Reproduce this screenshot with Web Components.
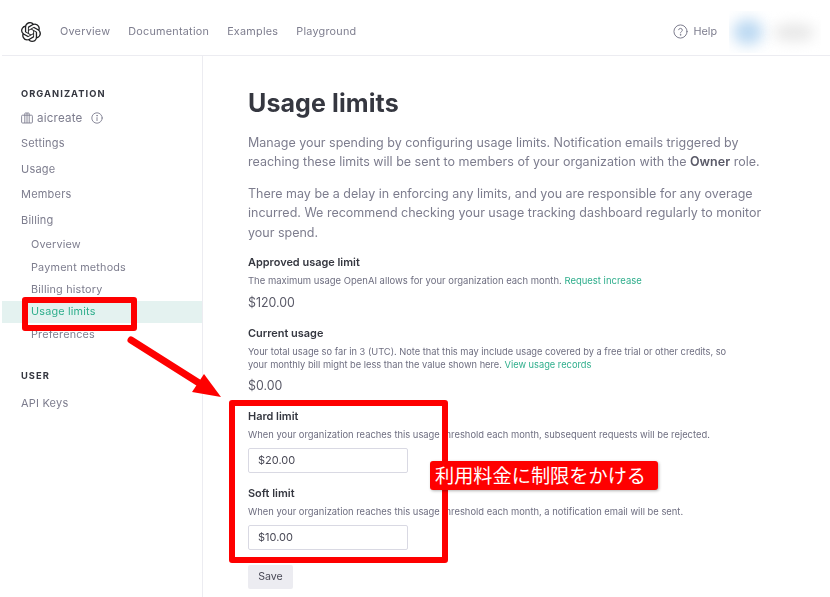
<!DOCTYPE html>
<html lang="en">
<head>
<meta charset="utf-8">
<title>Usage limits</title>
<style>
  html, body { margin: 0; padding: 0; background: #fff; height: 597px; overflow: hidden; }
  body { font-family: Inter, "Noto Sans", sans-serif; color: #6e6e80; }
</style>
</head>
<body>
<app-page>
  <top-bar slot="top"></top-bar>
  <side-nav slot="side"></side-nav>
  <limits-view slot="main"></limits-view>
</app-page>
<red-notes></red-notes>

<script>
class appPage extends HTMLElement {
    constructor() {
        super();
        this.attachShadow({mode: "open"}).innerHTML = `
            <style>
                :host { display: grid; grid-template-columns: 203px 1fr; grid-template-rows: 56px 541px; width: 830px; height: 597px; filter: blur(.3px); }
                .top { grid-column: 1 / 3; }
            </style>
            <div class="top"><slot name="top"></slot></div>
            <slot name="side"></slot>
            <slot name="main"></slot>`;
    }
}

class topBar extends HTMLElement {
    constructor() {
        super();
        this.attachShadow({mode: "open"}).innerHTML = `
            <style>
                :host { display: flex; align-items: center; height: 47px; margin-left: 2px; padding: 8px 0 0 19px; border-bottom: 1px solid #ececf1; font-size: 10.8px; color: #7d7d8e; }
                svg { display: block; }
                .logo { width: 20px; height: 20px; margin-right: 19px; color: #202123; }
                nav { display: flex; gap: 18px; letter-spacing: .25px; }
                .help { margin-left: auto; display: flex; align-items: center; gap: 5px; margin-right: 12px; }
                .help svg { width: 15px; height: 15px; }
                .who { width: 92px; height: 42px; margin-right: 9px; position: relative; overflow: hidden; }
                .who i { position: absolute; border-radius: 50%; filter: blur(7px); }
                .who .a { left: 4px; top: 8px; width: 30px; height: 26px; background: #bcd9f2; }
                .who .b { left: 44px; top: 13px; width: 42px; height: 17px; background: #e6e6e6; }
            </style>
            <svg class="logo" viewBox="0 0 24 24" fill="currentColor"><path d="M22.2819 9.8211a5.9847 5.9847 0 0 0-.5157-4.9108 6.0462 6.0462 0 0 0-6.5098-2.9A6.0651 6.0651 0 0 0 4.9807 4.1818a5.9847 5.9847 0 0 0-3.9977 2.9 6.0462 6.0462 0 0 0 .7427 7.0966 5.98 5.98 0 0 0 .511 4.9107 6.051 6.051 0 0 0 6.5146 2.9001A5.9847 5.9847 0 0 0 13.2599 24a6.0557 6.0557 0 0 0 5.7718-4.2058 5.9894 5.9894 0 0 0 3.9977-2.9001 6.0557 6.0557 0 0 0-.7475-7.0729zm-9.022 12.6081a4.4755 4.4755 0 0 1-2.8764-1.0408l.1419-.0804 4.7783-2.7582a.7948.7948 0 0 0 .3927-.6813v-6.7369l2.02 1.1686a.071.071 0 0 1 .038.052v5.5826a4.504 4.504 0 0 1-4.4945 4.4944zm-9.6607-4.1254a4.4708 4.4708 0 0 1-.5346-3.0137l.142.0852 4.783 2.7582a.7712.7712 0 0 0 .7806 0l5.8428-3.3685v2.3324a.0804.0804 0 0 1-.0332.0615L9.74 19.9502a4.4992 4.4992 0 0 1-6.1408-1.6464zM2.3408 7.8956a4.485 4.485 0 0 1 2.3655-1.9728V11.6a.7664.7664 0 0 0 .3879.6765l5.8144 3.3543-2.0201 1.1685a.0757.0757 0 0 1-.071 0l-4.8303-2.7865A4.504 4.504 0 0 1 2.3408 7.872zm16.5963 3.8558L13.1038 8.364 15.1192 7.2a.0757.0757 0 0 1 .071 0l4.8303 2.7913a4.4944 4.4944 0 0 1-.6765 8.1042v-5.6772a.79.79 0 0 0-.407-.667zm2.0107-3.0231l-.142-.0852-4.7735-2.7818a.7759.7759 0 0 0-.7854 0L9.409 9.2297V6.8974a.0662.0662 0 0 1 .0284-.0615l4.8303-2.7866a4.4992 4.4992 0 0 1 6.6802 4.66zM8.3065 12.863l-2.02-1.1638a.0804.0804 0 0 1-.038-.0567V6.0742a4.4992 4.4992 0 0 1 7.3757-3.4537l-.142.0805L8.704 5.459a.7948.7948 0 0 0-.3927.6813zm1.0976-2.3654l2.602-1.4998 2.6069 1.4998v2.9994l-2.5974 1.4997-2.6067-1.4997Z"/></svg>
            <nav><span>Overview</span><span>Documentation</span><span>Examples</span><span>Playground</span></nav>
            <div class="help">
                <svg viewBox="0 0 24 24" fill="none" stroke="currentColor" stroke-width="1.6" stroke-linecap="round"><circle cx="12" cy="12" r="10.5"/><path d="M9 9.2a3 3 0 0 1 5.9.8c0 2-3 2.6-3 4.3"/><circle cx="11.9" cy="17.4" r=".5"/></svg>
                <span>Help</span>
            </div>
            <div class="who"><i class="a"></i><i class="b"></i></div>`;
    }
}

class navItem extends HTMLElement {
    constructor() {
        super();
        this.attachShadow({mode: "open"}).innerHTML = `
            <style>
                :host { display: flex; align-items: center; height: 25.5px; margin-left: 2px; padding-left: 19px; font-size: 11px; letter-spacing: .2px; color: #7d7d8e; }
                :host([sub]) { height: 22.4px; padding-left: 29px; font-size: 10.8px; }
                :host([active]) { background: #e4f2f0; color: #2fae8c; }
            </style>
            <slot></slot>`;
    }
}

class navHead extends HTMLElement {
    constructor() {
        super();
        this.attachShadow({mode: "open"}).innerHTML = `
            <style>
                :host { display: block; margin-left: 21px; font-size: 9.3px; line-height: 12px; font-weight: 700; letter-spacing: 1.05px; color: #353740; }
            </style>
            <slot></slot>`;
    }
}

class sideNav extends HTMLElement {
    constructor() {
        super();
        this.attachShadow({mode: "open"}).innerHTML = `
            <style>
                :host { display: block; border-right: 1px solid #ececf1; padding-top: 31.5px; box-sizing: border-box; height: 541px; }
                .org { display: flex; align-items: center; height: 25px; margin-top: 6px; margin-left: 21px; font-size: 11.6px; letter-spacing: .2px; color: #7d7d8e; }
                .org svg { display: block; }
                .org .b { width: 12px; height: 12px; margin-right: 4px; }
                .org .i { width: 12px; height: 12px; margin-left: 8px; }
                .first-sub { margin-top: 1px; }
                .user { margin-top: 25px; margin-bottom: 8px; }
            </style>
            <nav-head>ORGANIZATION</nav-head>
            <div class="org">
                <svg class="b" viewBox="0 0 12 12" fill="none" stroke="currentColor" stroke-width=".9"><rect x=".6" y="3.2" width="10.8" height="7.8" rx="1"/><path d="M3.8 11V1.6a.6.6 0 0 1 .6-.6h3.2a.6.6 0 0 1 .6.6V11M6 1v10"/></svg>
                <span>aicreate</span>
                <svg class="i" viewBox="0 0 12 12" fill="none" stroke="currentColor" stroke-width=".9" stroke-linecap="round"><circle cx="6" cy="6" r="5.2"/><path d="M6 5.6v3"/><circle cx="6" cy="3.7" r=".3"/></svg>
            </div>
            <nav-item>Settings</nav-item>
            <nav-item>Usage</nav-item>
            <nav-item>Members</nav-item>
            <nav-item>Billing</nav-item>
            <nav-item sub class="first-sub">Overview</nav-item>
            <nav-item sub>Payment methods</nav-item>
            <nav-item sub>Billing history</nav-item>
            <nav-item sub active>Usage limits</nav-item>
            <nav-item sub>Preferences</nav-item>
            <nav-head class="user">USER</nav-head>
            <nav-item>API Keys</nav-item>`;
    }
}

class limitBlock extends HTMLElement {
    constructor() {
        super();
        this.attachShadow({mode: "open"}).innerHTML = `
            <style>
                :host { display: block; }
                h4 { margin: 0; font-size: 10.95px; line-height: 15px; font-weight: 600; color: #353740; }
                p { margin: 4px 0 0; font-size: var(--desc-size, 9.3px); line-height: 13px; color: #6e6e80; }
                ::slotted(a) { color: #2fae8c; }
                .val { margin-top: var(--val-gap, 7px); font-size: 12.4px; line-height: 18px; color: #5a5a68; }
            </style>
            <h4></h4>
            <p><slot></slot></p>
            <div class="val"><slot name="val"></slot></div>`;
        this.shadowRoot.querySelector("h4").textContent = this.getAttribute("title");
    }
}

class limitField extends HTMLElement {
    constructor() {
        super();
        this.attachShadow({mode: "open"}).innerHTML = `
            <style>
                :host { display: block; }
                h4 { margin: 0; font-size: 10.95px; line-height: 15px; font-weight: 600; color: #353740; }
                p { margin: 4px 0 0; font-size: 9.38px; line-height: 13px; color: #6e6e80; }
                .box { box-sizing: border-box; width: 160px; height: 25px; margin-top: 7px; padding-left: 9px; border: 1px solid #d9d9e3; border-radius: 2px; font-size: 11px; line-height: 23px; color: #4a4a57; }
            </style>
            <h4></h4>
            <p><slot></slot></p>
            <div class="box"></div>`;
        this.shadowRoot.querySelector("h4").textContent = this.getAttribute("title");
        this.shadowRoot.querySelector(".box").textContent = this.getAttribute("value");
    }
}

class limitsView extends HTMLElement {
    constructor() {
        super();
        this.attachShadow({mode: "open"}).innerHTML = `
            <style>
                :host { display: block; padding: 30px 0 0 45px; }
                h1 { margin: 0; font-size: 25px; line-height: 34px; font-weight: 700; color: #353740; letter-spacing: .1px; }
                p.lead { margin: 13px 0 0; width: 530px; font-size: 12.5px; line-height: 19.2px; color: #7d7d8e; }
                p.lead + p.lead { margin-top: 12.8px; }
                p.lead b { font-weight: 600; color: #5a5a68; }
                a { color: #2fae8c; }
                limit-block { margin-top: 14px; --val-gap: 6px; --desc-size: 9.28px; }
                limit-block.first { margin-top: 13px; --val-gap: 7px; --desc-size: 9.47px; }
                limit-field { margin-top: 13px; }
                limit-field.hard { margin-top: 14.5px; }
                .save { box-sizing: border-box; width: 45px; height: 24px; margin-top: 15px; border-radius: 2px; background: #ececf1; font-size: 10.6px; line-height: 24px; text-align: center; color: #4a4a57; }
            </style>
            <h1>Usage limits</h1>
            <p class="lead">Manage your spending by configuring usage limits. Notification emails triggered by<br>reaching these limits will be sent to members of your organization with the <b>Owner</b> role.</p>
            <p class="lead">There may be a delay in enforcing any limits, and you are responsible for any overage<br>incurred. We recommend checking your usage tracking dashboard regularly to monitor<br>your spend.</p>
            <limit-block class="first" title="Approved usage limit">The maximum usage OpenAI allows for your organization each month. <a>Request increase</a><span slot="val">$120.00</span></limit-block>
            <limit-block title="Current usage">Your total usage so far in 3 (UTC). Note that this may include usage covered by a free trial or other credits, so<br>your monthly bill might be less than the value shown here. <a>View usage records</a><span slot="val">$0.00</span></limit-block>
            <limit-field class="hard" title="Hard limit" value="$20.00">When your organization reaches this usage threshold each month, subsequent requests will be rejected.</limit-field>
            <limit-field title="Soft limit" value="$10.00">When your organization reaches this usage threshold each month, a notification email will be sent.</limit-field>
            <div class="save">Save</div>`;
    }
}

// the red marks lie over the page, so they are placed on it by coordinates
class redNotes extends HTMLElement {
    constructor() {
        super();
        this.attachShadow({mode: "open"}).innerHTML = `
            <style>
                :host { display: block; position: absolute; left: 0; top: 0; width: 830px; height: 597px; pointer-events: none; }
                .frame { position: absolute; box-sizing: border-box; border: 6px solid #fe0000; border-radius: 3px; }
                .f1 { left: 22px; top: 297px; width: 115px; height: 34px; }
                .f2 { left: 229px; top: 400px; width: 219px; height: 163px; border-width: 6.5px; }
                svg { position: absolute; left: 0; top: 0; }
                .note { position: absolute; left: 430px; top: 461px; width: 228px; height: 29px; box-sizing: border-box; padding-left: 5px; border-radius: 3px; background: #fe0000; box-shadow: 1px 1px 3px rgba(0,0,0,.3); color: #fff; font: 19.2px/29px "Noto Sans CJK JP", sans-serif; white-space: nowrap; }
            </style>
            <div class="frame f1"></div>
            <div class="frame f2"></div>
            <svg width="830" height="597" viewBox="0 0 830 597">
                <path d="M131 340 L199 383" stroke="#fe0000" stroke-width="7" stroke-linecap="round" fill="none"/>
                <path d="M192 392 L204 374 L221 397 Z" fill="#fe0000"/>
            </svg>
            <div class="note">利用料金に制限をかける</div>`;
    }
}

customElements.define("app-page", appPage);
customElements.define("top-bar", topBar);
customElements.define("nav-item", navItem);
customElements.define("nav-head", navHead);
customElements.define("side-nav", sideNav);
customElements.define("limit-block", limitBlock);
customElements.define("limit-field", limitField);
customElements.define("limits-view", limitsView);
customElements.define("red-notes", redNotes);
</script>
</body>
</html>
